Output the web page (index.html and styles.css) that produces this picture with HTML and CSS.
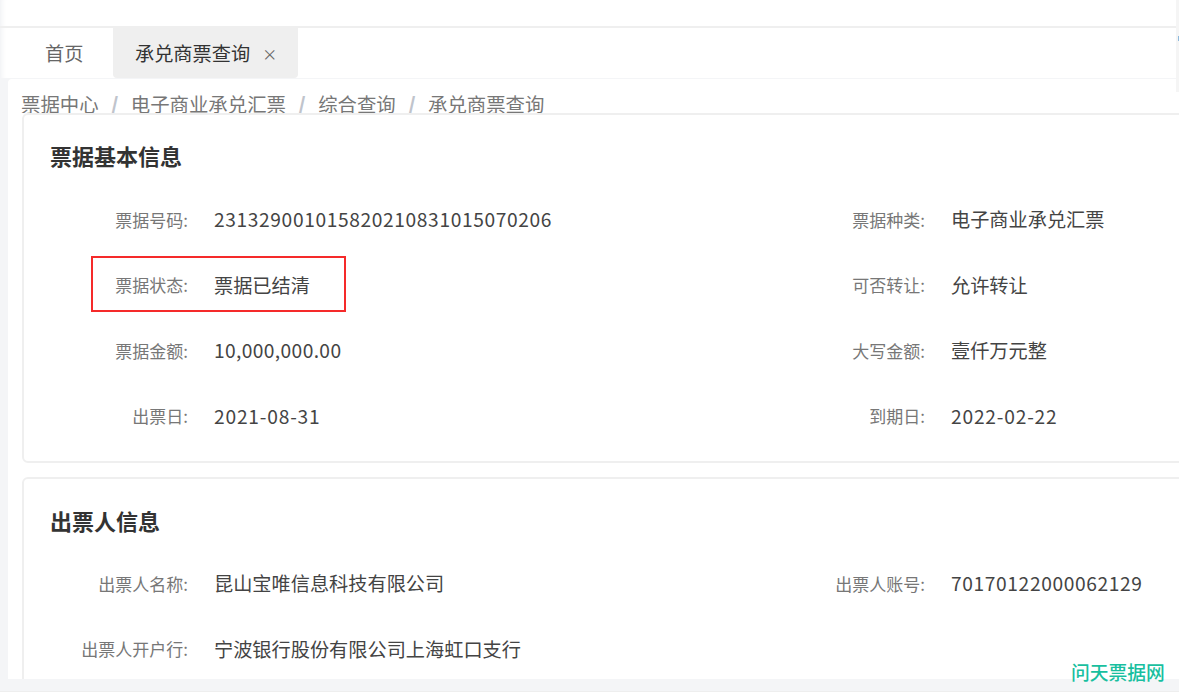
FILE: index.html
```html
<!DOCTYPE html>
<html lang="zh">
<head>
<meta charset="utf-8">
<title>承兑商票查询</title>
<link rel="stylesheet" href="styles.css">
</head>
<body>
<div class="page">
  <header class="topbar"></header>
  <nav class="tabs">
    <div class="tab">首页</div>
    <div class="tab tab-active"><span>承兑商票查询</span><span class="close">×</span></div>
  </nav>
  <main class="main">
    <div class="panel">
      <div class="crumbs">
        <span>票据中心</span><i>/</i><span>电子商业承兑汇票</span><i>/</i><span>综合查询</span><i>/</i><span>承兑商票查询</span>
      </div>
      <section class="card card-first">
        <h2>票据基本信息</h2>
        <div class="grid">
          <div class="field"><label>票据号码:</label><b class="num">231329001015820210831015070206</b></div>
          <div class="field"><label>票据种类:</label><b>电子商业承兑汇票</b></div>
          <div class="field"><label>票据状态:</label><b>票据已结清</b></div>
          <div class="field"><label>可否转让:</label><b>允许转让</b></div>
          <div class="field"><label>票据金额:</label><b class="money">10,000,000.00</b></div>
          <div class="field"><label>大写金额:</label><b>壹仟万元整</b></div>
          <div class="field"><label>出票日:</label><b class="date">2021-08-31</b></div>
          <div class="field"><label>到期日:</label><b class="date">2022-02-22</b></div>
        </div>
      </section>
      <section class="card card-second">
        <h2>出票人信息</h2>
        <div class="grid">
          <div class="field"><label>出票人名称:</label><b>昆山宝唯信息科技有限公司</b></div>
          <div class="field"><label>出票人账号:</label><b class="num">70170122000062129</b></div>
          <div class="field"><label>出票人开户行:</label><b>宁波银行股份有限公司上海虹口支行</b></div>
        </div>
      </section>
    </div>
  </main>
  <div class="highlight"></div>
  <div class="edge"><span class="edge-tick"></span></div>
  <div class="watermark">问天票据网</div>
</div>
</body>
</html>
```
FILE: styles.css
```css
* { box-sizing: border-box; }
html, body { margin: 0; padding: 0; background: #fff; }
body { font-family: "Noto Sans CJK SC", "Noto Sans", sans-serif; color: #333; }
.page { position: relative; width: 1179px; height: 698px; overflow: hidden; background: #fff; }
.topbar { height: 28px; background: #fff; border-bottom: 2px solid #efefef; box-shadow: inset 7px 0 6px -6px #eceef1; }
.tabs { display: flex; height: 50px; background: #fff; box-shadow: inset 7px 0 6px -6px #eceef1; }
.tab { width: 113px; display: flex; align-items: center; padding-left: 45px; font-size: 19.2px; color: #666; }
.tab-active { width: 185px; padding-left: 22px; background: #efefef; color: #333; border-radius: 0 0 4px 4px; }
.close { font-size: 15px; color: #666; margin-left: 12px; }
.main { height: 614px; width: 1179px; padding: 1px 0 0 8px; background: #f4f5f7; border-bottom: 1px solid #eee; }
.panel { height: 600px; width: 1200px; padding: 0 14px; background: #fff; border-radius: 4px 0 0 0; overflow: hidden; }
.crumbs { height: 34px; line-height: 49px; margin-left: -1px; font-size: 19.4px; color: #777; white-space: nowrap; overflow: hidden; }
.crumbs i { font-style: normal; font-weight: 900; color: #c0c4cc; margin: 0 12.4px; }
.card { width: 1180px; background: #fff; border: 2px solid #efefef; border-radius: 6px; padding: 0 26px; }
.card-first { height: 350px; margin-bottom: 14px; }
.card h2 { margin: 0; padding-top: 22px; font-size: 22px; line-height: 36px; font-weight: 700; color: #333; }
.card-first h2 { height: 84px; }
.card-second h2 { height: 84px; padding-top: 23px; }
.grid { display: grid; grid-template-columns: 737px 1fr; grid-auto-rows: 65.5px; }
.field { display: flex; align-items: center; height: 40px; white-space: nowrap; }
.field label { width: 138px; text-align: right; font-size: 17px; color: #777; }
.field b { margin-left: 26px; font-weight: 400; font-size: 19.2px; color: #444; }
.field .num { letter-spacing: .62px; }
.field .money { letter-spacing: .38px; }
.field .date { letter-spacing: .8px; }
.highlight { position: absolute; left: 91px; top: 256px; width: 255px; height: 56px; border: 2px solid #f52a2a; }
.edge { position: absolute; right: 0; top: 0; width: 3px; height: 92px; background: #f5f5f5; }
.edge-tick { position: absolute; right: 0; top: 36px; width: 1px; height: 5px; background: #8db9dc; }
.watermark { position: absolute; left: 1071px; top: 658px; font-size: 18.8px; line-height: 28px; font-weight: 500; color: #19bf9f; white-space: nowrap; }
```
